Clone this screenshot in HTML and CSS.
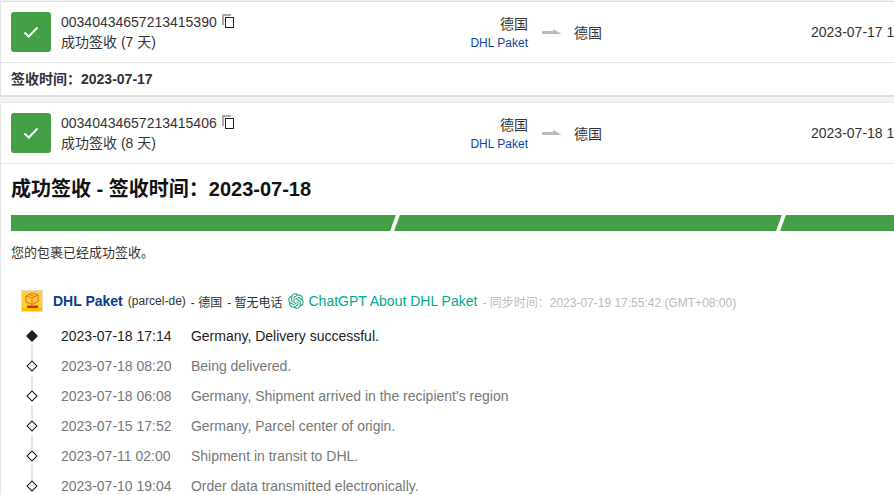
FILE: index.html
```html
<!DOCTYPE html>
<html lang="en">
<head>
    <meta charset="UTF-8">
    <meta name="viewport" content="width=device-width, initial-scale=1.0">
    <title>Tracking</title>
    <link rel="stylesheet" href="styles.css">
</head>
<body>
    <div class="card">
        <div class="summary">
            <div class="status-icon">
                <svg width="16" height="12" viewBox="0 0 16 12"><path d="M1.5 6.5L5.8 10.5L14.5 1.5" fill="none" stroke="#fff" stroke-width="2"/></svg>
            </div>
            <div class="number-col">
                <div class="number">00340434657213415390
                    <svg class="copy" width="12" height="14" viewBox="0 0 12 14"><path d="M1 11V1H9" fill="none" stroke="#aaa" stroke-width="2"/><rect x="3.5" y="3.5" width="8" height="10" fill="#fff" stroke="#222"/></svg>
                </div>
                <div>成功签收 (7 天)</div>
            </div>
            <div class="from-col">
                <div>德国</div>
                <div class="carrier">DHL Paket</div>
            </div>
            <svg class="arrow" width="20" height="6" viewBox="0 0 20 6"><path d="M0 2H11V0L20 5H0Z" fill="#bbb"/></svg>
            <div class="to-col">德国</div>
            <div class="date-col">2023-07-17 17:14</div>
        </div>
        <div class="signed">签收时间：2023-07-17</div>
    </div>

    <div class="card second">
        <div class="summary">
            <div class="status-icon">
                <svg width="16" height="12" viewBox="0 0 16 12"><path d="M1.5 6.5L5.8 10.5L14.5 1.5" fill="none" stroke="#fff" stroke-width="2"/></svg>
            </div>
            <div class="number-col">
                <div class="number">00340434657213415406
                    <svg class="copy" width="12" height="14" viewBox="0 0 12 14"><path d="M1 11V1H9" fill="none" stroke="#aaa" stroke-width="2"/><rect x="3.5" y="3.5" width="8" height="10" fill="#fff" stroke="#222"/></svg>
                </div>
                <div>成功签收 (8 天)</div>
            </div>
            <div class="from-col">
                <div>德国</div>
                <div class="carrier">DHL Paket</div>
            </div>
            <svg class="arrow" width="20" height="6" viewBox="0 0 20 6"><path d="M0 2H11V0L20 5H0Z" fill="#bbb"/></svg>
            <div class="to-col">德国</div>
            <div class="date-col">2023-07-18 17:14</div>
        </div>

        <div class="detail">
            <h2>成功签收 - 签收时间：2023-07-18</h2>
            <div class="progress">
                <div class="segment"></div>
                <div class="segment"></div>
                <div class="segment"></div>
            </div>
            <p class="message">您的包裹已经成功签收。</p>

            <div class="provider">
                <svg class="logo" width="22" height="22" viewBox="0 0 22 22">
                    <rect x="0.5" y="0.5" width="21" height="21" fill="#ffd02e" stroke="#ddd"/>
                    <rect x="1" y="18" width="20" height="3" fill="#ffb900"/>
                    <path d="M5 6L11 3L17 5V11.5L11 14.5L5 12ZM5 6L11 8L17 5M11 8V14.5M8 4.5L14 6.5" fill="none" stroke="#e0603a" stroke-width="0.9"/>
                    <rect x="6" y="15.5" width="11" height="2.5" fill="#d8301c"/>
                </svg>
                <b class="provider-name">DHL Paket</b>
                <span>(parcel-de)</span>
                <span>- 德国</span>
                <span>- 暂无电话</span>
                <svg class="gpt" width="16" height="16" viewBox="0 0 41 41"><path fill="#10a37f" d="M37.5324 16.8707C37.9808 15.5241 38.1363 14.0974 37.9886 12.6859C37.8409 11.2744 37.3934 9.91076 36.676 8.68622C35.6126 6.83404 33.9882 5.3676 32.0373 4.4985C30.0864 3.62941 27.9098 3.40259 25.8215 3.85078C24.8796 2.7893 23.7219 1.94125 22.4257 1.36341C21.1295 0.785575 19.7249 0.491269 18.3058 0.500197C16.1708 0.495044 14.0893 1.16803 12.3614 2.42214C10.6335 3.67624 9.34853 5.44666 8.6917 7.47815C7.30085 7.76286 5.98686 8.3414 4.8377 9.17505C3.68854 10.0087 2.73073 11.0782 2.02839 12.312C0.956464 14.1591 0.498905 16.2988 0.721698 18.4228C0.944492 20.5467 1.83612 22.5449 3.268 24.1293C2.81966 25.4759 2.66413 26.9026 2.81182 28.3141C2.95951 29.7256 3.40701 31.0892 4.12437 32.3138C5.18791 34.1659 6.8123 35.6322 8.76321 36.5013C10.7141 37.3704 12.8907 37.5973 14.979 37.1492C15.9208 38.2107 17.0786 39.0587 18.3747 39.6366C19.6709 40.2144 21.0755 40.5087 22.4946 40.4998C24.6307 40.5054 26.7133 39.8321 28.4418 38.5772C30.1704 37.3223 31.4556 35.5506 32.1119 33.5179C33.5027 33.2332 34.8167 32.6547 35.9659 31.821C37.115 30.9874 38.0728 29.9178 38.7752 28.684C39.8458 26.8371 40.3023 24.6979 40.0789 22.5748C39.8556 20.4517 38.9639 18.4544 37.5324 16.8707ZM22.4978 37.8849C20.7443 37.8874 19.0459 37.2733 17.6994 36.1501C17.7601 36.117 17.8666 36.0586 17.936 36.0161L25.9004 31.4156C26.1003 31.3019 26.2663 31.137 26.3813 30.9378C26.4964 30.7386 26.5563 30.5124 26.5549 30.2825V19.0542L29.9213 20.998C29.9389 21.0068 29.9541 21.0198 29.9656 21.0359C29.977 21.052 29.9842 21.0707 29.9867 21.0902V30.3889C29.9842 32.375 29.1946 34.2791 27.7909 35.6841C26.3872 37.0892 24.4838 37.8806 22.4978 37.8849ZM6.39227 31.0064C5.51397 29.4888 5.19742 27.7107 5.49804 25.9832C5.55718 26.0187 5.66048 26.0818 5.73461 26.1244L13.699 30.7248C13.8975 30.8408 14.1233 30.902 14.3532 30.902C14.583 30.902 14.8088 30.8408 15.0073 30.7248L24.731 25.1103V28.9979C24.7321 29.0177 24.7283 29.0376 24.7199 29.0556C24.7115 29.0736 24.6988 29.0893 24.6829 29.1012L16.6317 33.7497C14.9096 34.7416 12.8643 35.0097 10.9447 34.4954C9.02506 33.9811 7.38785 32.7263 6.39227 31.0064ZM4.29707 13.6194C5.17156 12.0998 6.55279 10.9364 8.19885 10.3327C8.19885 10.4013 8.19491 10.5228 8.19491 10.6071V19.808C8.19351 20.0378 8.25334 20.2638 8.36823 20.4629C8.48312 20.6619 8.64893 20.8267 8.84863 20.9404L18.5723 26.5542L15.206 28.4979C15.1894 28.5089 15.1703 28.5155 15.1505 28.5173C15.1307 28.5191 15.1107 28.516 15.0924 28.5082L7.04046 23.8557C5.32135 22.8601 4.06716 21.2235 3.55289 19.3046C3.03862 17.3858 3.30624 15.3413 4.29707 13.6194ZM31.955 20.0556L22.2312 14.4411L25.5976 12.4981C25.6142 12.4872 25.6333 12.4805 25.6531 12.4787C25.6729 12.4769 25.6928 12.4801 25.7111 12.4879L33.7631 17.1364C34.9967 17.849 36.0017 18.8982 36.6606 20.1613C37.3194 21.4244 37.6047 22.849 37.4832 24.2684C37.3617 25.6878 36.8382 27.0432 35.9743 28.1759C35.1103 29.3086 33.9415 30.1717 32.6047 30.6641C32.6047 30.5947 32.6047 30.4733 32.6047 30.3889V21.188C32.6066 20.9586 32.5474 20.7328 32.4332 20.5338C32.319 20.3348 32.154 20.1698 31.955 20.0556ZM35.3055 15.0128C35.2464 14.9765 35.1431 14.9142 35.069 14.8717L27.1045 10.2712C26.906 10.1554 26.6803 10.0943 26.4504 10.0943C26.2206 10.0943 25.9948 10.1554 25.7963 10.2712L16.0726 15.8858V11.9982C16.0715 11.9783 16.0753 11.9585 16.0837 11.9405C16.0921 11.9225 16.1048 11.9068 16.1207 11.8949L24.1719 7.25025C25.4053 6.53903 26.8158 6.19376 28.2383 6.25482C29.6608 6.31589 31.0364 6.78077 32.2044 7.59508C33.3723 8.40939 34.2842 9.53945 34.8334 10.8531C35.3826 12.1667 35.5464 13.6095 35.3055 15.0128ZM14.2424 21.9419L10.8752 19.9981C10.8576 19.9893 10.8423 19.9763 10.8309 19.9602C10.8195 19.9441 10.8122 19.9254 10.8098 19.9058V10.6071C10.8107 9.18295 11.2173 7.78848 11.9819 6.58696C12.7466 5.38544 13.8377 4.42659 15.1275 3.82264C16.4173 3.21869 17.8524 2.99464 19.2649 3.1767C20.6775 3.35876 22.0089 3.93941 23.1034 4.85067C23.0427 4.88379 22.937 4.94215 22.8668 4.98473L14.9024 9.58517C14.7025 9.69878 14.5366 9.86356 14.4215 10.0626C14.3065 10.2616 14.2466 10.4877 14.2479 10.7175L14.2424 21.9419ZM16.071 17.9991L20.4018 15.4978L24.7325 17.9975V22.9985L20.4018 25.4983L16.071 22.9985V17.9991Z"/></svg>
                <span class="gpt-link">ChatGPT About DHL Paket</span>
                <span class="sync">- 同步时间：2023-07-19 17:55:42 (GMT+08:00)</span>
            </div>

            <div class="events">
                <div class="event current">
                    <span class="event-time">2023-07-18 17:14</span>
                    <span>Germany, Delivery successful.</span>
                </div>
                <div class="event">
                    <span class="event-time">2023-07-18 08:20</span>
                    <span>Being delivered.</span>
                </div>
                <div class="event">
                    <span class="event-time">2023-07-18 06:08</span>
                    <span>Germany, Shipment arrived in the recipient's region</span>
                </div>
                <div class="event">
                    <span class="event-time">2023-07-15 17:52</span>
                    <span>Germany, Parcel center of origin.</span>
                </div>
                <div class="event">
                    <span class="event-time">2023-07-11 02:00</span>
                    <span>Shipment in transit to DHL.</span>
                </div>
                <div class="event">
                    <span class="event-time">2023-07-10 19:04</span>
                    <span>Order data transmitted electronically.</span>
                </div>
            </div>
        </div>
    </div>
</body>
</html>
```

FILE: styles.css
```css
html, body {
    height: 495px;
    overflow: hidden;
}
body {
    font-family: "Liberation Sans", "Noto Sans CJK SC", sans-serif;
    font-size: 14px;
    color: #333;
    margin: 0;
    padding-top: 1px;
    background-color: #f2f2f2;
}
.card {
    width: 1100px;
    background: white;
    border-top: 1px solid #e4e4e4;
    border-left: 1px solid #e4e4e4;
    border-bottom: 2px solid #e0e0e0;
}
.second {
    margin-top: 5px;
    border-bottom: none;
}
.summary {
    display: flex;
    align-items: center;
    height: 60px;
    padding-left: 10px;
    border-bottom: 1px solid #e4e4e4;
}
.status-icon {
    width: 40px;
    height: 40px;
    border-radius: 3px;
    background-color: #43a047;
    display: flex;
    align-items: center;
    justify-content: center;
    flex-shrink: 0;
}
.number-col {
    width: 310px;
    margin-left: 10px;
    line-height: 20px;
}
.copy {
    margin-left: 1px;
    vertical-align: -1px;
}
.from-col {
    width: 157px;
    padding-top: 2px;
    text-align: right;
    line-height: 20px;
}
.carrier {
    font-size: 12px;
    line-height: 18px;
    color: #0d47a1;
}
.arrow {
    margin-left: 14px;
    flex-shrink: 0;
}
.to-col {
    margin-left: 12px;
    width: 237px;
}
.signed {
    padding: 0 10px;
    height: 32px;
    line-height: 32px;
    font-weight: bold;
}
.detail {
    padding: 0 10px;
}
h2 {
    margin: 0;
    padding-top: 13px;
    font-size: 20px;
    line-height: 24px;
    color: #111;
}
.progress {
    display: flex;
    gap: 4px;
    height: 16px;
    margin-top: 14px;
    overflow: hidden;
}
.segment {
    width: 382px;
    flex-shrink: 0;
    background-color: #43a047;
    transform: skewX(-20deg);
}
.segment:first-child {
    width: 390px;
    margin-left: -8px;
}
.message {
    margin: 13px 0 0;
    font-size: 13px;
    line-height: 18px;
}
.provider {
    display: flex;
    align-items: center;
    gap: 5px;
    margin-top: 28px;
    padding-left: 10px;
    height: 22px;
    font-size: 12px;
    white-space: nowrap;
}
.logo {
    margin-right: 5px;
}
.provider-name {
    font-size: 14px;
    color: #0d3a8c;
}
.gpt-link {
    font-size: 14px;
    color: #00a98f;
}
.sync {
    color: #bbb;
}
.events {
    margin-top: 9px;
    padding-left: 50px;
}
.event {
    position: relative;
    height: 30px;
    line-height: 30px;
    color: #777;
    white-space: nowrap;
}
.event-time {
    display: inline-block;
    width: 126px;
}
/* diamond marker + connector */
.event::before {
    content: "";
    position: absolute;
    left: -33px;
    top: 11px;
    width: 6px;
    height: 6px;
    background: white;
    border: 1px solid #111;
    transform: rotate(45deg);
}
.event::after {
    content: "";
    position: absolute;
    left: -30px;
    top: 24px;
    width: 2px;
    height: 15px;
    background-color: #e6e6e6;
}
.current {
    color: #222;
}
.current::before {
    background-color: #222;
}
```
